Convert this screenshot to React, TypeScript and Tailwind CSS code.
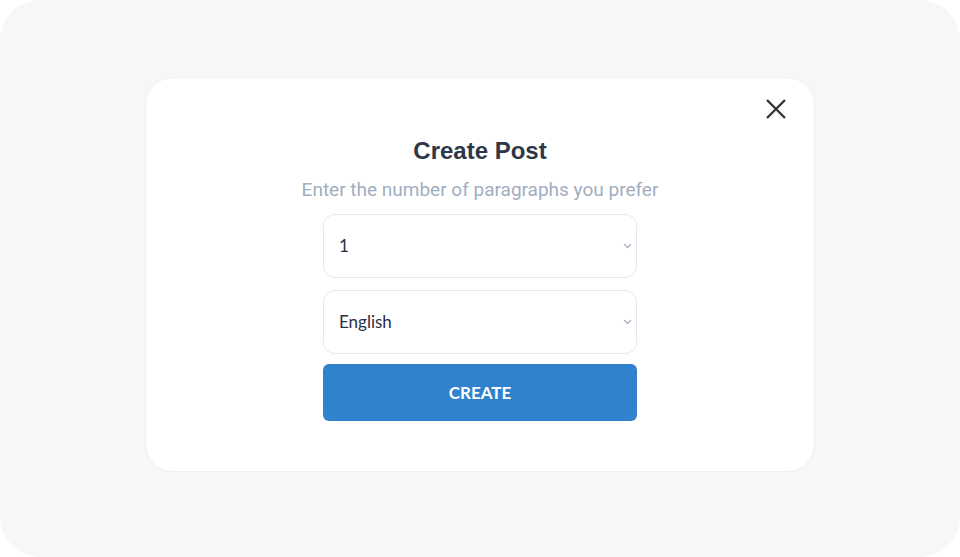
import { useState } from "react";

function Chevron() {
  return (
    <svg
      className="pointer-events-none absolute right-[5px] top-1/2 -translate-y-1/2"
      width="9"
      height="6"
      viewBox="0 0 9 6"
      fill="none"
    >
      <path d="M1 1.2l3.5 3.3L8 1.2" stroke="#9aa3ad" strokeWidth="1.1" />
    </svg>
  );
}

export default function App() {
  const [count, setCount] = useState("1");
  const [lang, setLang] = useState("English");

  return (
    <div className="h-[557px] w-[960px] bg-white">
      <div className="flex h-full w-full items-start justify-center rounded-[40px] bg-[#f5f7f9] pt-[77px]">
        <div className="relative flex h-[395px] w-[670px] flex-col items-center rounded-[28px] border border-[#edf0f3] bg-white pt-[58px]">
          <button className="absolute right-[22px] top-[15px] p-1 text-[#333333]">
            <svg width="24" height="24" viewBox="0 0 24 24" fill="none">
              <path d="M3 3l18 18M21 3L3 21" stroke="currentColor" strokeWidth="2.3" />
            </svg>
          </button>

          <h2 className="font-['Liberation_Sans',Arial,sans-serif] text-[24px] font-bold leading-[30px] text-[#2d3748]">
            Create Post
          </h2>
          <p className="mt-[12px] font-['Roboto',sans-serif] text-[19px] leading-[24px] text-[#a0aec0]">
            Enter the number of paragraphs you prefer
          </p>

          <div className="mt-[12px] flex w-[314px] flex-col gap-[12px] font-['Lato',sans-serif]">
            <div className="relative">
              <select
                value={count}
                onChange={(e) => setCount(e.target.value)}
                className="h-[64px] w-full appearance-none rounded-[12px] border border-[#e2e8f0] bg-white pl-[15px] text-[17px] text-[#2a2f45] outline-none"
              >
                {[1, 2, 3, 4, 5].map((n) => (
                  <option key={n}>{n}</option>
                ))}
              </select>
              <Chevron />
            </div>
            <div className="relative">
              <select
                value={lang}
                onChange={(e) => setLang(e.target.value)}
                className="h-[64px] w-full appearance-none rounded-[12px] border border-[#e2e8f0] bg-white pl-[15px] text-[17px] text-[#2a2f45] outline-none"
              >
                <option>English</option>
                <option>Spanish</option>
                <option>French</option>
              </select>
              <Chevron />
            </div>
          </div>

          <button className="mt-[10px] h-[57px] w-[314px] rounded-[6px] bg-[#3182ce] font-['Lato',sans-serif] text-[17px] font-bold text-white">
            CREATE
          </button>
        </div>
      </div>
    </div>
  );
}
